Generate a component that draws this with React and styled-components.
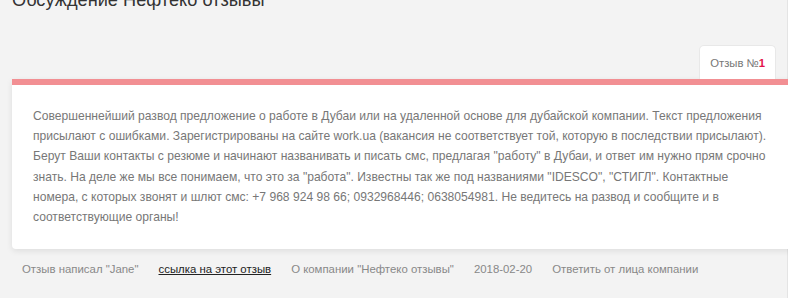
import React from 'react';
import styled, { createGlobalStyle } from 'styled-components';

const GlobalStyle = createGlobalStyle`
  html, body {
    margin: 0;
    padding: 0;
    background: #fff;
    font-family: "Liberation Sans", Arial, sans-serif;
  }
`;

const Page = styled.div`
  display: flex;
  height: 298px;
  overflow: hidden;
`;

const Main = styled.div`
  width: 775px;
  flex: none;
  background: #f3f3f3;
  border-right: 1px solid #e4e4e4;
  padding-left: 12px;
`;

const Aside = styled.div`
  flex: 1;
  background: #fff;
`;

const Title = styled.h1`
  margin: -11px 0 0;
  font-size: 18.2px;
  line-height: 22px;
  font-weight: normal;
  color: #333;
`;

const Tabs = styled.div`
  display: flex;
  justify-content: flex-end;
  padding-right: 11px;
  margin-top: 34px;
`;

const Tab = styled.div`
  height: 34px;
  box-sizing: border-box;
  padding: 0 10px;
  display: flex;
  align-items: center;
  background: #fff;
  border: 1px solid #e8e8e8;
  border-bottom: none;
  border-radius: 5px 5px 0 0;
  font-size: 11.3px;
  color: #777;
`;

const Num = styled.span`
  color: #e3124a;
  font-weight: bold;
`;

const Card = styled.div`
  margin-right: -40px;
  background: #fff;
  border-top: 6px solid #f28f93;
  border-radius: 0 0 4px 4px;
  box-shadow: 0 2px 6px rgba(0, 0, 0, 0.09);
  padding: 21px 58px 22px 21px;
`;

const Body = styled.p`
  margin: 0;
  font-size: 12.1px;
  line-height: 20.2px;
  color: #777;
`;

const Meta = styled.div`
  display: flex;
  gap: 20px;
  padding: 12px 0 0 10px;
  font-size: 11.4px;
  line-height: 16px;
  color: #888;
`;

const MetaLink = styled.a`
  color: ${({ $strong }) => ($strong ? '#222' : '#888')};
  text-decoration: ${({ $strong }) => ($strong ? 'underline' : 'none')};
`;

export default function App() {
  return (
    <>
      <GlobalStyle />
      <Page>
        <Main>
          <Title>Обсуждение Нефтеко отзывы</Title>
          <Tabs>
            <Tab>
              Отзыв №<Num>1</Num>
            </Tab>
          </Tabs>
          <Card>
            <Body>
              Совершеннейший развод предложение о работе в Дубаи или на удаленной основе для дубайской компании. Текст предложения присылают с ошибками. Зарегистрированы на сайте work.ua (вакансия не соответствует той, которую в последствии присылают). Берут Ваши контакты с резюме и начинают названивать и писать смс, предлагая "работу" в Дубаи, и ответ им нужно прям срочно знать. На деле же мы все понимаем, что это за "работа". Известны так же под названиями "IDESCO", "СТИГЛ". Контактные номера, с которых звонят и шлют смс: +7 968 924 98 66; 0932968446; 0638054981. Не ведитесь на развод и сообщите и в соответствующие органы!
            </Body>
          </Card>
          <Meta>
            <span>Отзыв написал "Jane"</span>
            <MetaLink $strong href="#">ссылка на этот отзыв</MetaLink>
            <MetaLink href="#">О компании "Нефтеко отзывы"</MetaLink>
            <span>2018-02-20</span>
            <MetaLink href="#">Ответить от лица компании</MetaLink>
          </Meta>
        </Main>
        <Aside />
      </Page>
    </>
  );
}
